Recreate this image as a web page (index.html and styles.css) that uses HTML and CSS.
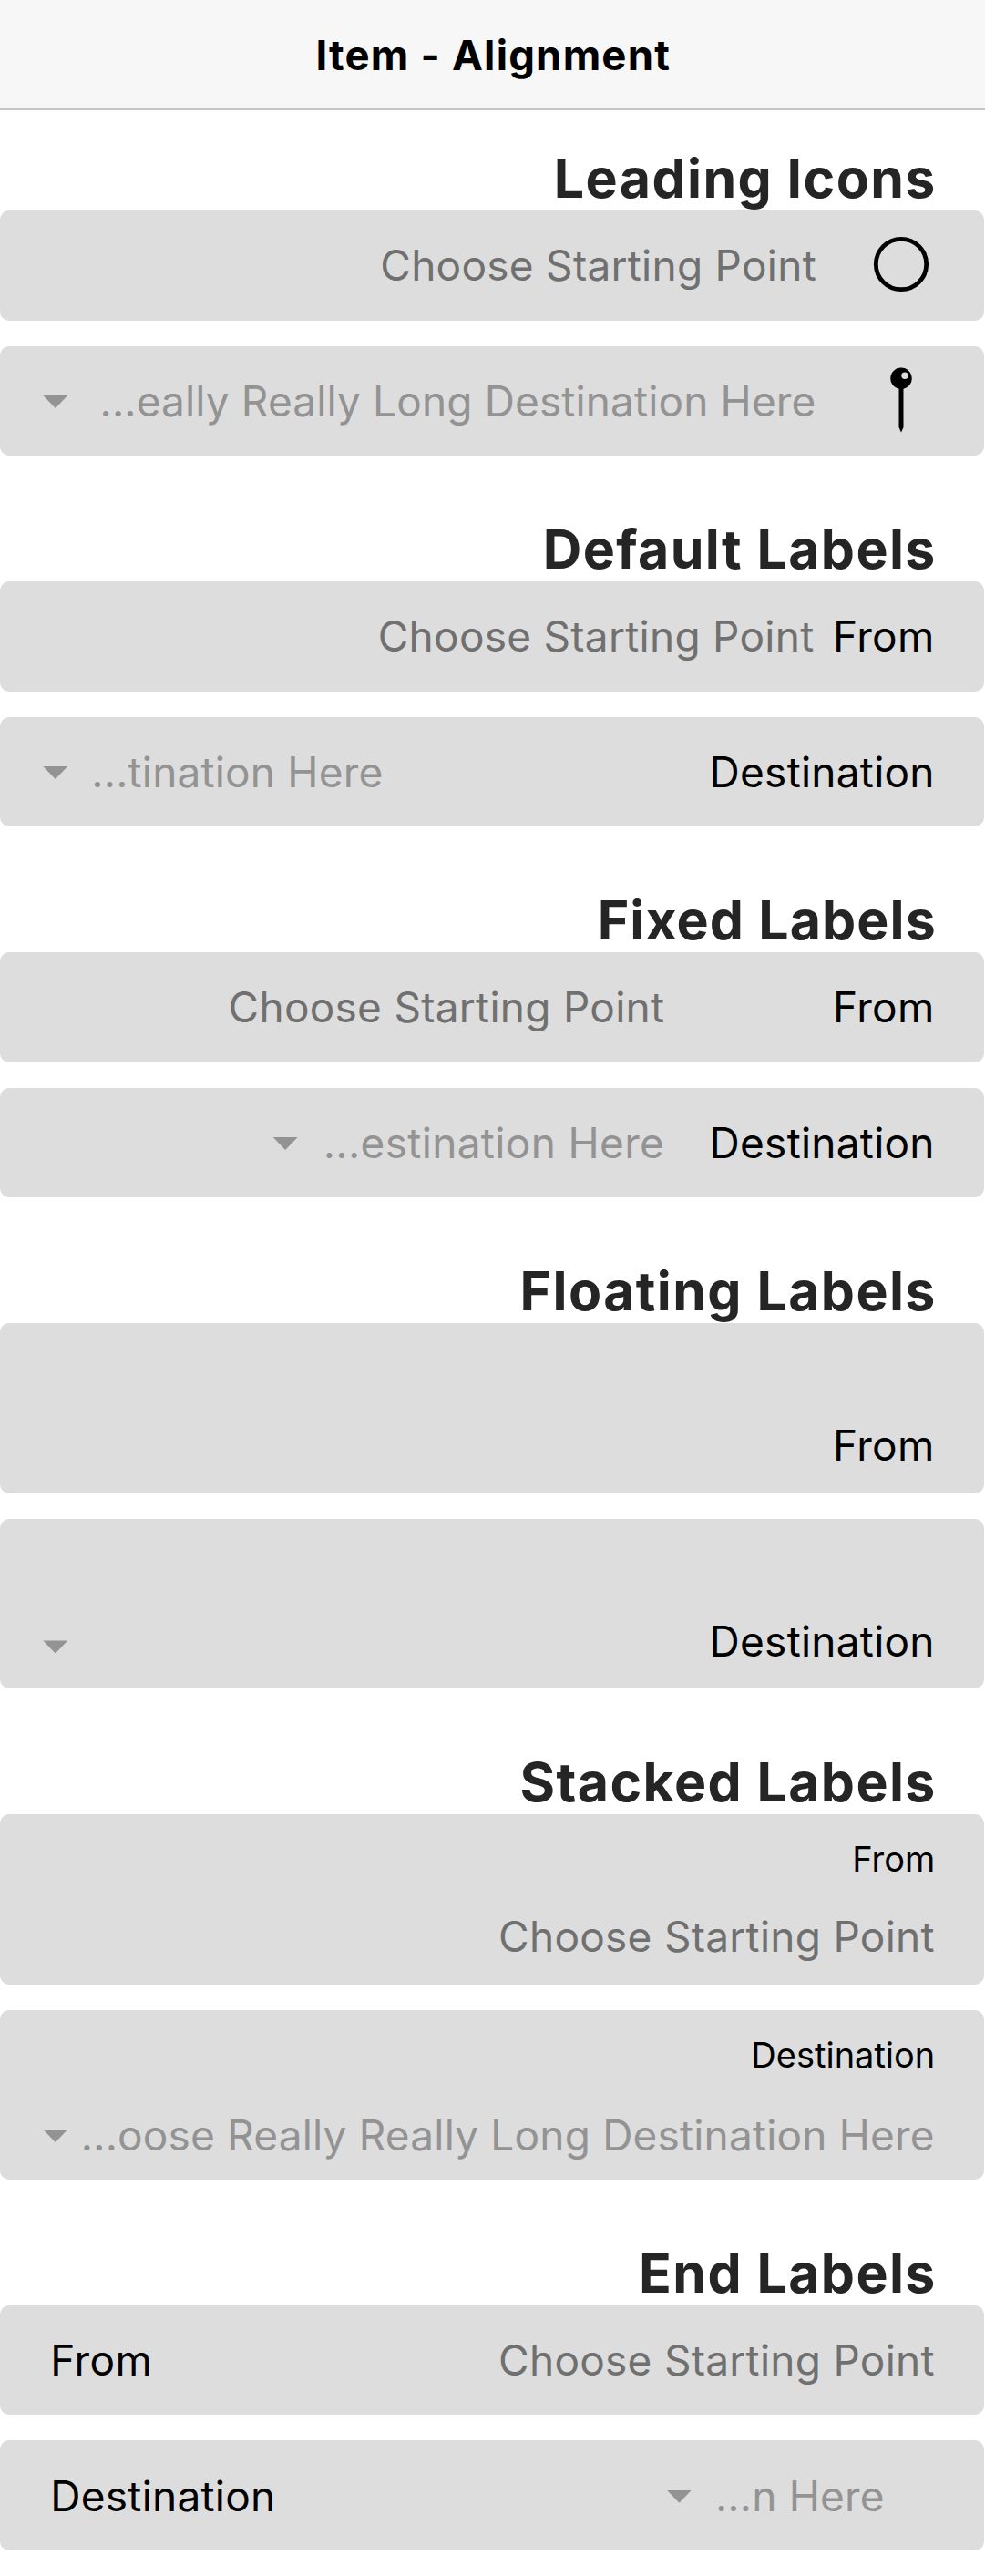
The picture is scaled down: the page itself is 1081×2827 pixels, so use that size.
FILE: index.html
```html
<!DOCTYPE html>
<html lang="en">
<head>
<meta charset="utf-8">
<title>Item - Alignment</title>
<link rel="stylesheet" href="styles.css">
</head>
<body>
<header class="toolbar"><h1 class="toolbar-title">Item - Alignment</h1></header>
<main class="content">
  <section class="group">
    <h2 class="group-title">Leading Icons</h2>
    <div class="item icon-item">
      <span class="value placeholder">Choose Starting Point</span>
      <svg class="icon" viewBox="0 0 72 72"><circle cx="36" cy="36" r="27.7" fill="none" stroke="#000" stroke-width="4.8"/></svg>
    </div>
    <div class="item icon-item">
      <i class="arrow push"></i>
      <span class="value muted">...eally Really Long Destination Here</span>
      <svg class="icon" viewBox="0 0 72 72"><circle cx="36" cy="12.3" r="11.7"/><path d="M33.5 20h5v46L36 71.4 33.5 66z"/><circle cx="40" cy="9.3" r="3.7" fill="#ddd"/></svg>
    </div>
  </section>

  <section class="group">
    <h2 class="group-title">Default Labels</h2>
    <div class="item">
      <span class="value placeholder default-gap">Choose Starting Point</span>
      <span class="label short">From</span>
    </div>
    <div class="item">
      <i class="arrow"></i>
      <span class="value muted push start">...tination Here</span>
      <span class="label">Destination</span>
    </div>
  </section>

  <section class="group">
    <h2 class="group-title tight">Fixed Labels</h2>
    <div class="item">
      <span class="value placeholder">Choose Starting Point</span>
      <span class="label short fixed">From</span>
    </div>
    <div class="item">
      <i class="arrow"></i>
      <span class="value muted fixed-value">...estination Here</span>
      <span class="label fixed">Destination</span>
    </div>
  </section>

  <section class="group">
    <h2 class="group-title">Floating Labels</h2>
    <div class="item tall">
      <div class="row"><span class="label short">From</span></div>
    </div>
    <div class="item tall">
      <div class="row"><i class="arrow push low"></i><span class="label">Destination</span></div>
    </div>
  </section>

  <section class="group">
    <h2 class="group-title">Stacked Labels</h2>
    <div class="item tall">
      <div class="row"><span class="label small">From</span></div>
      <div class="row"><span class="value placeholder">Choose Starting Point</span></div>
    </div>
    <div class="item tall select">
      <div class="row"><span class="label small">Destination</span></div>
      <div class="row"><i class="arrow push"></i><span class="value muted">...oose Really Really Long Destination Here</span></div>
    </div>
  </section>

  <section class="group">
    <h2 class="group-title">End Labels</h2>
    <div class="item end">
      <span class="label short push">From</span>
      <span class="value placeholder">Choose Starting Point</span>
    </div>
    <div class="item end">
      <span class="label push">Destination</span>
      <i class="arrow"></i>
      <span class="value muted start inset">...n Here</span>
    </div>
  </section>
</main>
</body>
</html>
```
FILE: styles.css
```css
* { box-sizing: border-box; }
body {
  margin: 0;
  width: 1081px;
  height: 2827px;
  overflow: hidden;
  background: #fff;
  color: #000;
  font-family: Inter, "Liberation Sans", sans-serif;
}
.toolbar {
  height: 121px;
  padding: 3px 0 0 1.5px;
  display: flex;
  align-items: center;
  justify-content: center;
  background: #f7f7f7;
  border-bottom: 3px solid #c5c5c5;
}
.toolbar-title {
  margin: 0;
  font-size: 45.5px;
  line-height: 60px;
  font-weight: 700;
  letter-spacing: 1.2px;
}
.content { padding-top: 0.33px; }
.group {
  display: flex;
  flex-direction: column;
  width: 1080.3px;
  padding-bottom: 28px;
}
.group-title {
  height: 109.67px;
  margin: 0;
  padding: 45px 52.5px 0 0;
  text-align: right;
  color: #252525;
  font-size: 59px;
  line-height: 60px;
  font-weight: 700;
  letter-spacing: 1.4px;
}
.tight { letter-spacing: 1.1px; }
.item {
  display: flex;
  align-items: center;
  justify-content: flex-end;
  height: 120.67px;
  padding: 0 54.5px 0 47.3px;
  background: #ddd;
  border-radius: 10px;
  font-size: 46px;
  line-height: 58px;
  white-space: nowrap;
}
.item + .item { margin-top: 28px; }
.tall {
  height: 186.67px;
  flex-direction: column;
  align-items: stretch;
  gap: 27px;
  padding-bottom: 23.3px;
}
.row {
  display: flex;
  align-items: center;
  justify-content: flex-end;
  height: 58px;
}
.select { gap: 30px; padding-bottom: 20.3px; }
.value { letter-spacing: 0.18px; }
.placeholder { color: #707070; letter-spacing: 0.26px; }
.muted { color: #939393; }
.label { letter-spacing: 0.25px; }
.short { letter-spacing: 0.4px; }
.small { font-size: 38px; letter-spacing: 0; margin-right: -0.5px; }
.fixed { width: 296.5px; text-align: right; }
.fixed-value { margin-left: 28px; letter-spacing: 0.35px; }
.default-gap { margin-right: 20.5px; }
.icon-item { padding-right: 55.8px; }
.icon { width: 72px; height: 72px; margin: 0 0 2.7px 56.5px; }
.icon-item .muted { letter-spacing: 0.13px; margin-right: 0.5px; }
.arrow {
  flex: none;
  width: 27px;
  height: 14px;
  margin-top: 2px;
  background: #939393;
  clip-path: polygon(0 0, 100% 0, 50% 100%);
}
.low { margin-top: 13px; }
.push { margin-right: auto; }
.start { margin-left: 26px; }
.end { padding-left: 55.3px; }
.inset { margin-right: 55px; }
```
